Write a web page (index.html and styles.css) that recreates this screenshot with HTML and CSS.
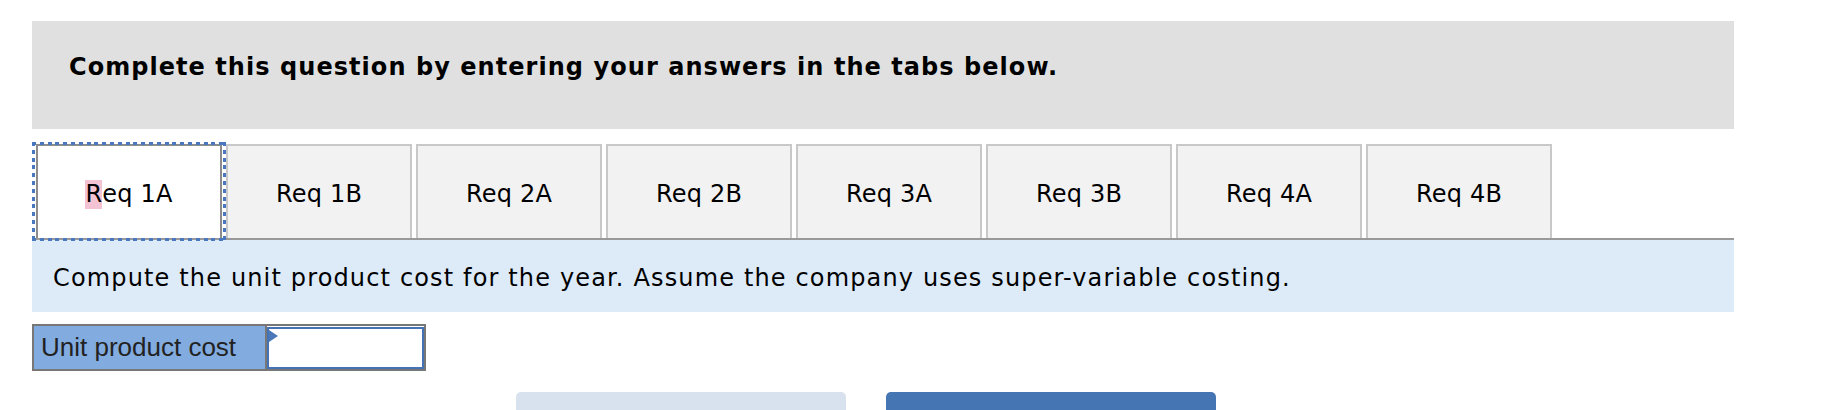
FILE: index.html
```html
<!DOCTYPE html>
<html lang="en">
<head>
<meta charset="utf-8">
<title>Question tabs</title>
<link rel="stylesheet" href="styles.css">
</head>
<body>
<div class="panel">
  <div class="instructions">
    <h2 class="instructions-title">Complete this question by entering your answers in the tabs below.</h2>
  </div>
  <div class="tabs">
    <div class="tab tab-active"><span class="hl">R</span>eq 1A</div>
    <div class="tab">Req 1B</div>
    <div class="tab">Req 2A</div>
    <div class="tab">Req 2B</div>
    <div class="tab">Req 3A</div>
    <div class="tab">Req 3B</div>
    <div class="tab">Req 4A</div>
    <div class="tab">Req 4B</div>
  </div>
  <div class="prompt">Compute the unit product cost for the year. Assume the company uses super-variable costing.</div>
  <div class="answer">
    <div class="answer-label">Unit product cost</div>
    <div class="answer-input"><span class="flag"></span></div>
  </div>
  <div class="buttons">
    <div class="btn btn-light"></div>
    <div class="btn btn-dark"></div>
  </div>
</div>
</body>
</html>
```
FILE: styles.css
```css
html, body {
  margin: 0;
  padding: 0;
  background: #ffffff;
}
body {
  font-family: "DejaVu Sans", Verdana, sans-serif;
  color: #000;
  overflow: hidden;
}
.panel {
  margin: 21px 0 0 32px;
  width: 1702px;
}
.instructions {
  background: #e0e0e0;
  height: 108px;
  padding-left: 37px;
  display: flex;
  align-items: center;
}
.instructions-title {
  margin: 0;
  font-size: 24px;
  font-weight: bold;
  letter-spacing: 1.05px;
  line-height: 1;
  position: relative;
  top: -8px;
}
.tabs {
  display: flex;
  margin-top: 15px;
  padding-left: 4px;
  border-bottom: 2px solid #999999;
}
.tab {
  box-sizing: border-box;
  width: 186px;
  height: 94px;
  margin-right: 4px;
  padding-top: 4px;
  background: #f2f2f2;
  border: 2px solid #c8c8c8;
  border-bottom: none;
  display: flex;
  align-items: center;
  justify-content: center;
  font-size: 24px;
  letter-spacing: 0.2px;
  color: #000;
}
.tab-active {
  position: relative;
  background: #ffffff;
  border-color: #8c8c8c;
}
.tab-active::before {
  content: "";
  position: absolute;
  top: -4px;
  left: -6px;
  right: -6px;
  bottom: -3px;
  background:
    repeating-linear-gradient(90deg, #4a78bf 0 4px, transparent 4px 7.8px) top left / 100% 3px no-repeat,
    repeating-linear-gradient(90deg, #4a78bf 0 4px, transparent 4px 7.8px) bottom left / 100% 3px no-repeat,
    repeating-linear-gradient(180deg, #4a78bf 0 4px, transparent 4px 7.8px) top left / 3px 100% no-repeat,
    repeating-linear-gradient(180deg, #4a78bf 0 4px, transparent 4px 7.8px) top right / 3px 100% no-repeat;
  pointer-events: none;
}
.hl {
  background: #f4c3d3;
  display: inline-block;
  line-height: 29px;
}
.prompt {
  box-sizing: border-box;
  background: #ddebf8;
  height: 72px;
  padding: 3px 0 0 21px;
  display: flex;
  align-items: center;
  font-size: 24px;
  letter-spacing: 1.15px;
}
.answer {
  display: flex;
  margin-top: 12px;
  width: 394px;
  height: 47px;
  box-sizing: border-box;
  border: 2px solid #777777;
}
.answer-label {
  width: 233px;
  background: #82acdf;
  border-right: 2px solid #777777;
  font-family: "Liberation Sans", Arial, sans-serif;
  font-size: 26px;
  color: #222222;
  display: flex;
  align-items: center;
  padding-left: 7px;
  box-sizing: border-box;
}
.answer-input {
  flex: 1;
  position: relative;
  background: #ffffff;
  border: 2px solid #4472b4;
  margin: 1px 0 0 0;
}
.flag {
  position: absolute;
  top: 1px;
  left: 0;
  width: 0;
  height: 0;
  border-top: 6px solid transparent;
  border-bottom: 6px solid transparent;
  border-left: 9px solid #4a78b8;
}
.buttons {
  display: flex;
  gap: 40px;
  margin: 21px 0 0 484px;
}
.btn {
  width: 330px;
  height: 50px;
  border-radius: 5px 5px 0 0;
}
.btn-light {
  background: #d8e2ee;
}
.btn-dark {
  background: #4675b3;
}
```
